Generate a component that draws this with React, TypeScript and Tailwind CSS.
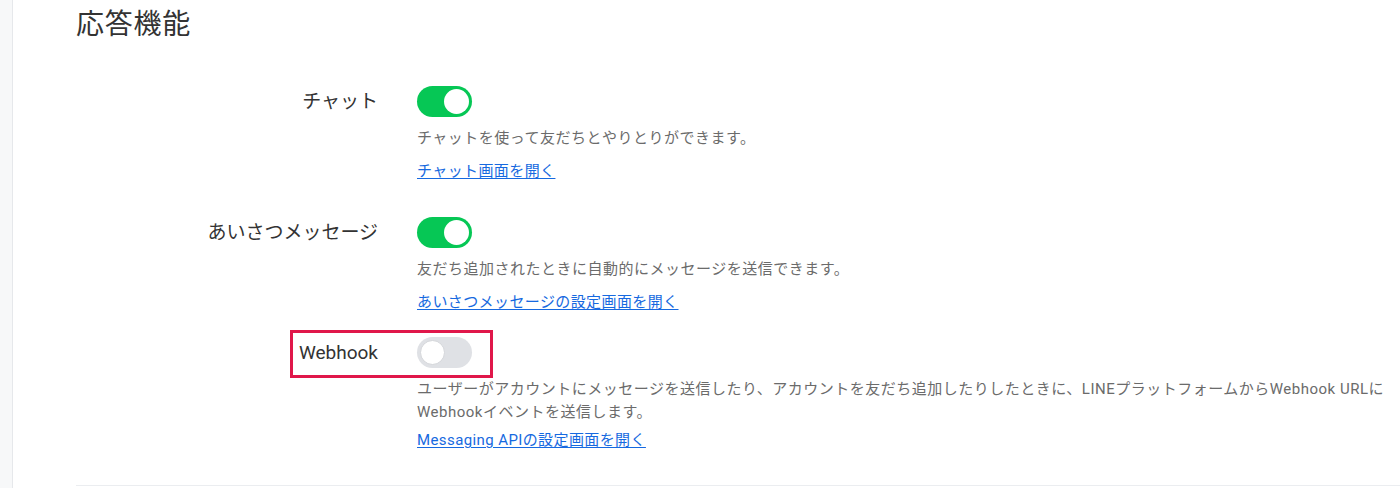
import React from "react";

type Feature = {
  label: string;
  on: boolean;
  description: React.ReactNode;
  link: string;
  highlight?: boolean;
};

function Toggle({ on }: { on: boolean }) {
  return (
    <button
      type="button"
      role="switch"
      aria-checked={on}
      className={
        on
          ? "relative flex h-[31px] w-[55px] shrink-0 items-center rounded-full bg-[#06c755] px-[3px] justify-end"
          : "relative flex h-[31px] w-[55px] shrink-0 items-center rounded-full bg-[#dfe1e5] px-[3px] justify-start"
      }
    >
      <span
        className={
          on
            ? "block h-[25px] w-[25px] rounded-full bg-white"
            : "block h-[25px] w-[25px] rounded-full bg-white border border-[#d4d6da]"
        }
      />
    </button>
  );
}

function FeatureRow({ item, className }: { item: Feature; className: string }) {
  return (
    <div className={"relative flex " + className}>
      {/* Label column */}
      <div className="w-[302px] shrink-0 text-right text-[19px] leading-[31px] text-[#333]">
        {item.label}
      </div>

      {/* Toggle + description */}
      <div className="ml-[39px] flex flex-col items-start">
        <Toggle on={item.on} />
        <p className="mt-[10px] text-[15px] leading-[23px] tracking-[0.5px] text-[#6b6b6b]">
          {item.description}
        </p>
        <a
          href="#"
          className={
            item.highlight
              ? "mt-[5px] text-[15px] leading-[23px] tracking-[0.4px] text-[#1669e0] underline underline-offset-2"
              : "mt-[10px] text-[15px] leading-[23px] tracking-[0.4px] text-[#1669e0] underline underline-offset-2"
          }
        >
          {item.link}
        </a>
      </div>

      {/* annotation box over the Webhook label + toggle */}
      {item.highlight && (
        <div className="pointer-events-none absolute left-[214px] top-[-7px] h-[48px] w-[203px] border-[3px] border-[#e0174a]" />
      )}
    </div>
  );
}

const features: Feature[] = [
  {
    label: "チャット",
    on: true,
    description: "チャットを使って友だちとやりとりができます。",
    link: "チャット画面を開く",
  },
  {
    label: "あいさつメッセージ",
    on: true,
    description: "友だち追加されたときに自動的にメッセージを送信できます。",
    link: "あいさつメッセージの設定画面を開く",
  },
  {
    label: "Webhook",
    on: false,
    description: (
      <>
        ユーザーがアカウントにメッセージを送信したり、アカウントを友だち追加したりしたときに、LINEプラットフォームからWebhook URLに
        <br />
        Webhookイベントを送信します。
      </>
    ),
    link: "Messaging APIの設定画面を開く",
    highlight: true,
  },
];

export default function App() {
  return (
    <div
      className="flex h-[488px] w-[1400px] overflow-hidden bg-white"
      style={{ fontFamily: 'Roboto, "Noto Sans CJK JP", sans-serif' }}
    >
      {/* Sidebar edge */}
      <div className="w-[13px] shrink-0 border-r border-[#e6e8eb] bg-[#f7f8f9]" />

      <main className="flex flex-1 flex-col pl-[63px]">
        <h2 className="pt-[6px] text-[28px] leading-[38px] tracking-[0.75px] text-[#333]">応答機能</h2>

        <FeatureRow item={features[0]} className="mt-[42px]" />
        <FeatureRow item={features[1]} className="mt-[34px]" />
        <FeatureRow item={features[2]} className="mt-[23px]" />

        <div className="mt-auto mb-[2px] border-b border-[#ebedf0]" />
      </main>
    </div>
  );
}
